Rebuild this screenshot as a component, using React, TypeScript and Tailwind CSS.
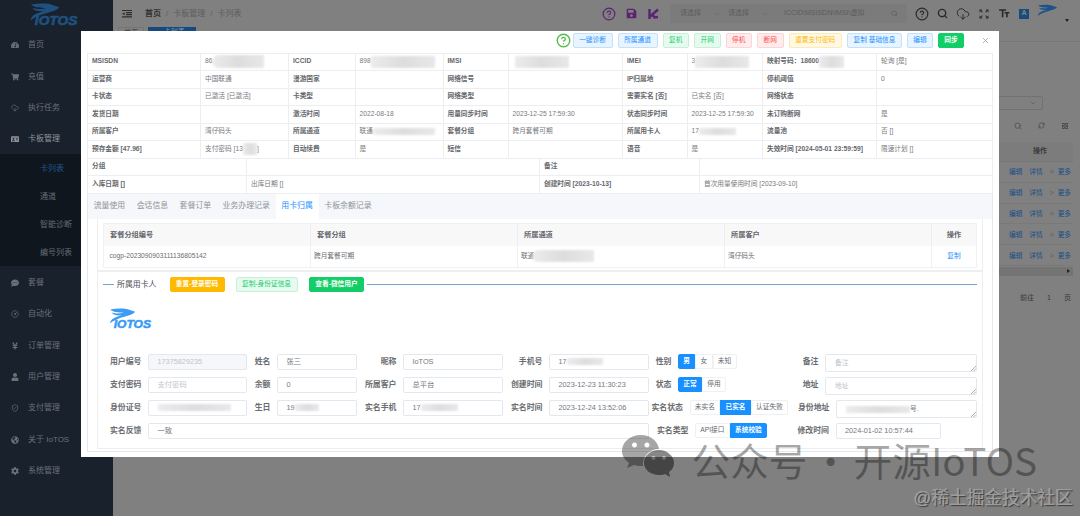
import type { ReactNode } from "react";
import { ChevronDown, CircleHelp, CloudDownload, RefreshCw, Search, X } from "lucide-react";
import { FaGlobeAmericas, FaShoppingCart, FaTachometerAlt, FaUser, FaYenSign, FaIdCard, FaCog, FaCommentDots, FaSave } from "react-icons/fa";
import { LuCloudDownload, LuCircleGauge, LuShieldCheck } from "react-icons/lu";
import { MdFormatSize, MdGridView, MdZoomOutMap } from "react-icons/md";

function BirdPath() {
  return (
    <path d="M4 4C24 0 48 0 60 5L78 11C73 17 68 19 58 22C44 27 24 30 3 45C4 36 12 29 26 25L40 21C24 23 12 20 8 13C20 17 34 16 44 13C26 13 12 12 4 4Z" />
  );
}

function Logo({ className }: { className: string }) {
  return (
    <svg viewBox="0 0 128 60" className={className} fill="currentColor">
      <BirdPath />
      <text
        x="14"
        y="58"
        textLength="111"
        lengthAdjust="spacingAndGlyphs"
        fontSize="31"
        fontWeight="700"
        fontStyle="italic"
        stroke="currentColor"
        strokeWidth="1.5"
        fontFamily="Liberation Sans, sans-serif"
      >
        IOTOS
      </text>
    </svg>
  );
}

/* Masked part of a sensitive value */
function Mask({ className }: { className: string }) {
  return <span className={`inline-block shrink-0 bg-gradient-to-r from-[#ececec] via-[#dddddd] to-[#e8e8e8] blur-[1px] ${className}`} />;
}

const menuTop = [
  { icon: <FaTachometerAlt size={8} />, label: "首页" },
  { icon: <FaShoppingCart size={8} />, label: "充值" },
  { icon: <LuCloudDownload size={8} />, label: "执行任务" },
];
const subMenu = ["卡列表", "通道", "智能诊断", "编号列表"];
const menuBottom = [
  { icon: <FaCommentDots size={8} />, label: "套餐" },
  { icon: <LuCircleGauge size={8} />, label: "自动化" },
  { icon: <FaYenSign size={8} />, label: "订单管理" },
  { icon: <FaUser size={8} />, label: "用户管理" },
  { icon: <LuShieldCheck size={8} />, label: "支付管理" },
  { icon: <FaGlobeAmericas size={8} />, label: "关于 IoTOS" },
  { icon: <FaCog size={8} />, label: "系统管理" },
];

function MenuItem({ icon, label, active }: { icon: ReactNode; label: string; active?: boolean }) {
  return (
    <div className={`flex h-[31.4px] items-center gap-[9px] pl-[11px] pt-[2px] text-[8px] ${active ? "text-[#92979f]" : "text-[#69717c]"}`}>
      {icon}
      <span>{label}</span>
    </div>
  );
}

function Sidebar() {
  return (
    <aside className="h-full w-[113px] shrink-0 bg-[#19212c]">
      <div className="flex h-[28.5px] pl-[29px] pt-[3px]">
        <Logo className="h-[23px] w-[50px] text-[#1f517f]" />
      </div>
      {menuTop.map((m) => (
        <MenuItem key={m.label} {...m} />
      ))}
      <MenuItem icon={<FaIdCard size={8} />} label="卡板管理" active />
      <div className="bg-[#0f161e]">
        {subMenu.map((s, i) => (
          <div key={s} className={`flex h-[28px] items-center pl-[40px] pt-[2px] text-[8px] ${i === 0 ? "text-[#24568c]" : "text-[#656c76]"}`}>
            {s}
          </div>
        ))}
      </div>
      {menuBottom.map((m) => (
        <MenuItem key={m.label} {...m} />
      ))}
    </aside>
  );
}

function TopBar() {
  return (
    <header className="flex h-[27px] items-center pl-[9px] text-[8px] text-[#5c5d5f]">
      <svg viewBox="0 0 10 8" className="h-[9px] w-[10px]" fill="none" stroke="#2c2c2c" strokeWidth="1.2">
        <path d="M0 1H10M4 3.2H10M4 5.2H10M0 7.4H10" />
        <path d="M0 4.2L2.6 2.7V5.7Z" fill="#2c2c2c" stroke="none" />
      </svg>
      <div className="ml-[13px] flex gap-[5px] pt-px">
        <span className="font-bold text-[#303133]">首页</span>
        <span>/</span>
        <span>卡板管理</span>
        <span>/</span>
        <span>卡列表</span>
      </div>
      <div className="ml-auto flex items-center pr-[11px]">
        <CircleHelp size={14} className="text-[#5b2372]" strokeWidth={2} />
        <FaSave size={11} className="ml-[10px] text-[#5b2372]" />
        <svg viewBox="0 0 12 12" className="ml-[11px] h-[12px] w-[12px]" fill="none" stroke="#5b2372" strokeWidth="2.4">
          <path d="M1.5 1V11M1.5 9L10 1.5M4.5 6.5L6.5 9.5L10 9" />
        </svg>
        <div className="ml-[10px] flex h-[19px] w-[237px] items-center bg-[#7b7b7b] pl-[10px] text-[7px] text-[#5b5c5e]">
          <span className="w-[34px]">请选择</span>
          <ChevronDown size={6} />
          <span className="ml-[8px] w-[34px]">请选择</span>
          <ChevronDown size={6} />
          <span className="ml-[16px]">ICCID\MSISDN\IMSI\虚拟</span>
          <Search size={7} className="ml-auto mr-[9px]" />
        </div>
        <div className="ml-[8px] flex items-center gap-[8px] text-[#292929]">
          <CircleHelp size={14} />
          <Search size={11} strokeWidth={3} />
          <CloudDownload size={14} strokeWidth={1.6} />
          <MdZoomOutMap size={12} />
          <MdFormatSize size={13} className="-scale-x-100" />
          <span className="flex h-[10px] w-[10px] items-center justify-center bg-[#174c7c] text-[7px] font-bold text-[#858585]">A</span>
          <svg viewBox="0 0 78 48" className="mb-[6px] h-[13px] w-[20px]" fill="#1d5388">
            <BirdPath />
          </svg>
          <span className="mt-[13px] h-0 w-0 border-x-2 border-t-[3px] border-x-transparent border-t-[#222]" />
        </div>
      </div>
    </header>
  );
}

function PageBehind() {
  return (
    <div className="flex flex-1 flex-col bg-[#808080]">
      <TopBar />
      <div className="flex h-[15px] items-start gap-[4px] border-b border-[#767676] pl-[5px] text-[7px]">
        <span className="h-[13px] w-[26px] border border-[#757575] text-center text-[#333]">首页</span>
        <span className="h-[13px] w-[48px] bg-[#164a7c] text-center text-[#8a9aab]">• 卡列表</span>
      </div>
      <div className="flex flex-col items-end">
        <div className="mr-[37px] mt-[54px] flex h-[14px] w-[220px] items-center justify-end rounded-[2px] border border-[#717171] pr-[5px]">
          <ChevronDown size={8} className="text-[#5c5c5c]" />
        </div>
        <div className="mr-[11px] mt-[12px] flex gap-[15px] text-[#444]">
          <Search size={8} />
          <RefreshCw size={7} className="mx-[1px]" />
          <MdGridView size={8} />
        </div>
        <div className="mr-[7px] mt-[12px] flex h-[20px] w-[74px] items-center justify-center border-b border-[#777] bg-[#7c7c7c] pl-[8px] text-[7px] font-bold text-[#3b3b3b]">
          操作
        </div>
        {[0, 1, 2, 3, 4].map((n) => (
          <div key={n} className="mr-[7px] flex h-[20.8px] w-[74px] items-center justify-end gap-[7px] border-b border-[#797979] pr-[2px] pt-px text-[6.7px] text-[#164e88]">
            <span>编辑</span>
            <span>详情</span>
            <span className="-mr-[3px] text-[#5a5a5a]">&gt;</span>
            <span>更多</span>
          </div>
        ))}
        <div className="mr-[7px] mt-px flex h-[9px] w-[74px] items-center justify-end bg-[#747474] pr-[3px]">
          <span className="h-0 w-0 border-y-2 border-l-[3px] border-y-transparent border-l-[#222]" />
        </div>
        <div className="mr-[9px] mt-[17.5px] flex text-[7px] text-[#383838]">
          <span className="mr-[13px]">前往</span>
          <span className="mr-[13px]">1</span>
          <span>页</span>
        </div>
      </div>
    </div>
  );
}

const tones = {
  blue: "border-[#c4e1fc] bg-[#e8f4ff] text-[#1890ff]",
  green: "border-[#c5f1d8] bg-[#e7faf0] text-[#13ce66]",
  red: "border-[#ffd4d4] bg-[#ffeded] text-[#ff4949]",
  yellow: "border-[#fdebb5] bg-[#fff8e6] text-[#ffba00]",
  solidGreen: "border-[#13ce66] bg-[#13ce66] text-white",
  solidYellow: "border-[#ffba00] bg-[#ffba00] text-white",
};

function Btn({ tone, className, children }: { tone: keyof typeof tones; className: string; children: ReactNode }) {
  return (
    <button className={`flex h-[15px] shrink-0 items-center justify-center whitespace-nowrap rounded-[2px] border text-[6.7px] leading-none ${tones[tone]} ${className}`}>
      {children}
    </button>
  );
}

function DialogHeader() {
  return (
    <div className="flex h-[21.5px] items-start pl-[468.5px] pt-[1.5px]">
      <CircleHelp size={15} className="mr-[2px] shrink-0 text-[#55bd4b]" strokeWidth={2.2} />
      <div className="flex gap-[5px]">
        <Btn tone="blue" className="w-[40px]">一键诊断</Btn>
        <Btn tone="blue" className="w-[40px]">所属通道</Btn>
        <Btn tone="green" className="w-[26.5px]">复机</Btn>
        <Btn tone="green" className="w-[26.5px]">开网</Btn>
        <Btn tone="red" className="w-[26.5px]">停机</Btn>
        <Btn tone="red" className="w-[26.5px]">断网</Btn>
        <Btn tone="yellow" className="w-[53.5px]">重置支付密码</Btn>
        <Btn tone="blue" className="w-[55px]">复制 基础信息</Btn>
        <Btn tone="blue" className="w-[26px]">编辑</Btn>
        <Btn tone="solidGreen" className="w-[26px] font-bold">同步</Btn>
      </div>
      <X size={9} className="ml-[17px] mt-[3px] shrink-0 text-[#909399]" strokeWidth={1.8} />
    </div>
  );
}

const rows: ReactNode[][] = [
  [
    "MSISDN",
    <>86<Mask className="h-[13px] w-[52px] rounded-l-full" /></>,
    "ICCID",
    <>898<Mask className="h-[12px] w-[64px]" /></>,
    "IMSI",
    <Mask className="ml-[2px] h-[12px] w-[54px]" />,
    "IMEI",
    <>3<Mask className="h-[12px] w-[54px]" /></>,
    <>映射号码：18600<Mask className="h-[12px] w-[25px]" /></>,
    "轮询 [是]",
  ],
  ["运营商", "中国联通", "漫游国家", "", "网络信号", "", "IP归属地", "", "停机阈值", "0"],
  ["卡状态", "已激活 [已激活]", "卡类型", "", "网络类型", "", "需要实名 [否]", "已实名 [否]", "网络状态", ""],
  ["发货日期", "", "激活时间", "2022-08-18", "用量同步时间", "2023-12-25 17:59:30", "状态同步时间", "2023-12-25 17:59:30", "未订购断网", "是"],
  [
    "所属客户",
    "湾仔码头",
    "所属通道",
    <>联通<Mask className="h-[7px] w-[62px] from-[#cccccc] via-[#d9d9d9] to-[#cccccc]" /></>,
    "套餐分组",
    "跨月套餐可期",
    "所属用卡人",
    <>17<Mask className="h-[7px] w-[37px] from-[#cccccc] via-[#d9d9d9] to-[#cccccc]" /></>,
    "流量池",
    "否 []",
  ],
  [
    "预存金额 [47.96]",
    <>支付密码 [13<Mask className="h-[12px] w-[14px]" />]</>,
    "自动续费",
    "是",
    "短信",
    "",
    "语音",
    "是",
    "失效时间 [2024-05-01 23:59:59]",
    "限速计划 []",
  ],
];

const extraRows = [
  ["分组", "", "备注", ""],
  ["入库日期 []", "出库日期 []", "创建时间 [2023-10-13]", "首次用量使用时间 [2023-09-10]"],
];

function Cell({ head, children }: { head: boolean; children: ReactNode }) {
  return (
    <div className={`flex h-[17.5px] items-center overflow-hidden whitespace-nowrap border-b border-r border-[#eceef2] pl-[4px] ${head ? "font-bold text-[#65676b]" : "text-[#77797d]"}`}>
      {children}
    </div>
  );
}

function Descriptions() {
  return (
    <div className="border-l border-t border-[#eceef2] text-[6.7px] leading-none">
      <div className="grid grid-cols-[113px_88px_66.5px_88px_65px_114.5px_64.5px_75.5px_114px_1fr]">
        {rows.flatMap((r, y) => r.map((c, x) => <Cell key={`${y}-${x}`} head={x % 2 === 0}>{c}</Cell>))}
      </div>
      <div className="grid grid-cols-[159px_293px_160px_1fr]">
        {extraRows.flatMap((r, y) => r.map((c, x) => <Cell key={`${y}-${x}`} head={x % 2 === 0}>{c}</Cell>))}
      </div>
    </div>
  );
}

const tabs = ["流量使用", "会话信息", "套餐订单", "业务办理记录", "用卡归属", "卡板余额记录"];

function Tabs() {
  return (
    <div className="flex h-[25px] bg-[#f5f7fa] text-[7.9px] leading-none text-[#909399]">
      {tabs.map((t) => (
        <div key={t} className={`flex items-center px-[5.7px] ${t === "用卡归属" ? "bg-white text-[#1890ff]" : ""}`}>
          {t}
        </div>
      ))}
    </div>
  );
}

function PackageTable() {
  const cols = "grid grid-cols-[207px_207px_207px_207px_1fr]";
  return (
    <div className="border border-[#eef0f4] text-[6.7px] leading-none text-[#6a6c70]">
      <div className={`${cols} h-[22px] bg-[#f8f8f9] text-[7.2px] font-bold text-[#65676c]`}>
        {["套餐分组编号", "套餐分组", "所属通道", "所属客户"].map((h) => (
          <div key={h} className="flex items-center border-r border-[#eceef2] pl-[6px]">{h}</div>
        ))}
        <div className="flex items-center justify-center">操作</div>
      </div>
      <div className={`${cols} h-[21px]`}>
        <div className="flex items-center border-r border-[#eef0f4] pl-[5.5px]">cogp-2023090903111136805142</div>
        <div className="flex items-center border-r border-[#eef0f4] pl-[3px]">跨月套餐可期</div>
        <div className="flex items-center border-r border-[#eef0f4] pl-[3px]">联通<Mask className="-ml-[2px] h-[12px] w-[62px] rounded-l-full" /></div>
        <div className="flex items-center border-r border-[#eef0f4] pl-[3px]">湾仔码头</div>
        <div className="flex items-center justify-center text-[#1890ff]">复制</div>
      </div>
    </div>
  );
}

function Label({ className, children }: { className: string; children: ReactNode }) {
  return <label className={`shrink-0 whitespace-nowrap pr-[6.5px] pt-[4px] text-right text-[7.9px] font-bold leading-none text-[#6a6c70] ${className}`}>{children}</label>;
}

function Input({ className, children }: { className: string; children: ReactNode }) {
  return (
    <div className={`flex h-[15.5px] shrink-0 items-center rounded-[2px] border border-[#e4e7ed] pb-px pl-[8.5px] text-[7.3px] leading-none ${className}`}>
      {children}
    </div>
  );
}

function Area({ className, children }: { className: string; children: ReactNode }) {
  return (
    <div className={`flex h-[18px] shrink-0 items-center justify-between rounded-[2px] border border-[#e4e7ed] pl-[9px] text-[6.7px] leading-none ${className}`}>
      <span className="flex items-center">{children}</span>
      <svg viewBox="0 0 6 6" className="h-[5px] w-[5px] self-end" fill="none" stroke="#888" strokeWidth="0.8">
        <path d="M0 6L6 0M3 6L6 3" />
      </svg>
    </div>
  );
}

/* Segmented radio group; widths follow the option text */
function Radios({ options, value, className }: { options: string[]; value: string; className: string }) {
  return (
    <div className={`flex h-[15px] shrink-0 text-[6.7px] leading-none ${className}`}>
      {options.map((o) => (
        <span
          key={o}
          className={`flex items-center whitespace-nowrap border px-[4.3px] first:rounded-l-[2px] last:rounded-r-[2px] ${o === value ? "border-[#1890ff] bg-[#1890ff] font-bold text-white" : "border-[#eef0f4] text-[#65676b]"}`}
        >
          {o}
        </span>
      ))}
    </div>
  );
}

function UserForm() {
  return (
    <div className="mt-[25.5px] text-[#75777b]">
      <div className="flex h-[23px]">
        <Label className="w-[45px]">用户编号</Label>
        <Input className="w-[99px] bg-[#f5f7fa] text-[#c0c4cc]">17375829235</Input>
        <Label className="w-[30px]">姓名</Label>
        <Input className="w-[80px]">张三</Input>
        <Label className="w-[46px]">昵称</Label>
        <Input className="w-[99.5px]">IoTOS</Input>
        <Label className="w-[46.5px]">手机号</Label>
        <Input className="w-[99.5px]">17<Mask className="h-[7px] w-[36px] from-[#cfcfcf] via-[#cccccc] to-[#dddddd]" /></Input>
        <Label className="w-[29.5px]">性别</Label>
        <Radios className="w-[57px]" options={["男", "女", "未知"]} value="男" />
        <Label className="w-[90px]">备注</Label>
        <Area className="w-[152px] text-[#c0c4cc]">备注</Area>
      </div>
      <div className="flex h-[23px]">
        <Label className="w-[45px]">支付密码</Label>
        <Input className="w-[99px] text-[#c0c4cc]">支付密码</Input>
        <Label className="w-[30px]">余额</Label>
        <Input className="w-[80px]">0</Input>
        <Label className="w-[46px]">所属客户</Label>
        <Input className="w-[99.5px]">总平台</Input>
        <Label className="w-[46.5px]">创建时间</Label>
        <Input className="w-[99.5px]">2023-12-23 11:30:23</Input>
        <Label className="w-[29.5px]">状态</Label>
        <Radios className="w-[57px]" options={["正常", "停用"]} value="正常" />
        <Label className="w-[90px]">地址</Label>
        <Area className="w-[152px] text-[#c0c4cc]">地址</Area>
      </div>
      <div className="flex h-[23px]">
        <Label className="w-[45px]">身份证号</Label>
        <Input className="w-[99px]"><Mask className="h-[7px] w-[73px] from-[#cfcfcf] via-[#c8c8c8] to-[#cccccc]" /></Input>
        <Label className="w-[30px]">生日</Label>
        <Input className="w-[80px]">19<Mask className="h-[7px] w-[24px] from-[#cccccc] via-[#d2d2d2] to-[#dddddd]" /></Input>
        <Label className="w-[46px]">实名手机</Label>
        <Input className="w-[99.5px]">17<Mask className="h-[7px] w-[37px] from-[#cccccc] via-[#d2d2d2] to-[#cccccc]" /></Input>
        <Label className="w-[46.5px]">实名时间</Label>
        <Input className="w-[99.5px]">2023-12-24 13:52:06</Input>
        <Label className="w-[41px]">实名状态</Label>
        <Radios className="w-[97px]" options={["未实名", "已实名", "认证失败"]} value="已实名" />
        <Label className="w-[49.5px]">身份地址</Label>
        <Area className="w-[141px]"><Mask className="h-[7px] w-[64px] from-[#cccccc] via-[#d2d2d2] to-[#bbbbbb]" />号.</Area>
      </div>
      <div className="flex h-[23px]">
        <Label className="w-[45px]">实名反馈</Label>
        <Input className="w-[500.5px]">一致</Input>
        <Label className="w-[46.5px]">实名类型</Label>
        <Radios className="w-[91.5px]" options={["API接口", "系统校验"]} value="系统校验" />
        <Label className="w-[49px]">修改时间</Label>
        <Input className="w-[105px]">2024-01-02 10:57:44</Input>
      </div>
    </div>
  );
}

function Dialog() {
  return (
    <div className="absolute left-[81px] top-[31px] h-[425.5px] w-[918px] bg-white px-[6px]">
      <DialogHeader />
      <Descriptions />
      <div className="h-[258px] border-x border-b border-[#e4e7ed]">
        <Tabs />
        <div className="mx-[9px] border-x border-b-2 border-[#eeeff1] px-[5px] pb-[2.5px] pt-[4px]">
          <PackageTable />
        </div>
        <div className="mx-[9px] h-[177px] border-x border-b border-[#eceef0] px-[5px] pt-[5px]">
          <div className="flex h-[15px] items-center text-[7.9px] leading-none text-[#4c4e52]">
            <span className="h-px w-[11px] bg-[#6fa6d3]" />
            <span className="ml-[3px] w-[52.5px]">所属用卡人</span>
            <Btn tone="solidYellow" className="w-[55px] font-bold">重置-登录密码</Btn>
            <Btn tone="green" className="ml-[11px] w-[62px]">复制-身份证信息</Btn>
            <Btn tone="solidGreen" className="ml-[11.5px] w-[55px] font-bold">查看-微信用户</Btn>
            <span className="ml-[3px] h-px flex-1 bg-[#6fa6d3]" />
          </div>
          <Logo className="ml-[6px] mt-[16px] h-[20.5px] w-[43px] text-[#3b9bf5]" />
          <UserForm />
        </div>
      </div>
    </div>
  );
}

function Watermark() {
  return (
    <div className="pointer-events-none absolute bottom-0 right-0 h-[81px] w-[460px]">
      <div className="flex h-[51px] items-start pl-[2px] text-black/35">
        <svg viewBox="0 0 52 42" className="h-[42px] w-[52px]" fill="currentColor">
          <path
            fillRule="evenodd"
            d="M19 0C8 0 0 7 0 16C0 21 3 25 7 28L5 33L12 30C15 31 18 31 21 31C20 22 27 14 37 14C36 6 28 0 19 0ZM12.500 7.500A2.500 2.500 0 1 1 12.490 7.500ZM25 7.500A2.500 2.500 0 1 1 24.990 7.500Z"
          />
          <path
            fillRule="evenodd"
            d="M37 15C28 15 22 21 22 28C22 35 29 40 37 40C39 40 41 40 43 39L48 42L47 37C50 35 52 32 52 28C52 21 45 15 37 15ZM31.500 21A2 2 0 1 1 31.490 21ZM42 21A2 2 0 1 1 41.990 21Z"
          />
          <path d="M37 15C28 15 22 21 22 28C22 35 29 40 37 40C39 40 41 40 43 39L48 42L47 37C50 35 52 32 52 28C52 21 45 15 37 15Z" fillOpacity="0.5" />
        </svg>
        <span className="ml-[17.5px] mt-[5px] whitespace-nowrap font-['Noto_Sans_CJK_SC',sans-serif] text-[38.7px] leading-[38px] [word-spacing:-5px]">公众号 · 开源IoTOS</span>
      </div>
      <div className="pr-[7px] text-right text-[17.7px] leading-[25px] text-[#9d9d9d] [text-shadow:1px_1px_1px_rgba(0,0,0,0.55),-0.5px_-0.5px_0_rgba(255,255,255,0.3)]">
        @稀土掘金技术社区
      </div>
    </div>
  );
}

export default function App() {
  return (
    <div className="relative flex h-[516px] w-[1080px] overflow-hidden font-['Liberation_Sans','Noto_Sans_CJK_SC',sans-serif]">
      <Sidebar />
      <PageBehind />
      <Dialog />
      <Watermark />
    </div>
  );
}
